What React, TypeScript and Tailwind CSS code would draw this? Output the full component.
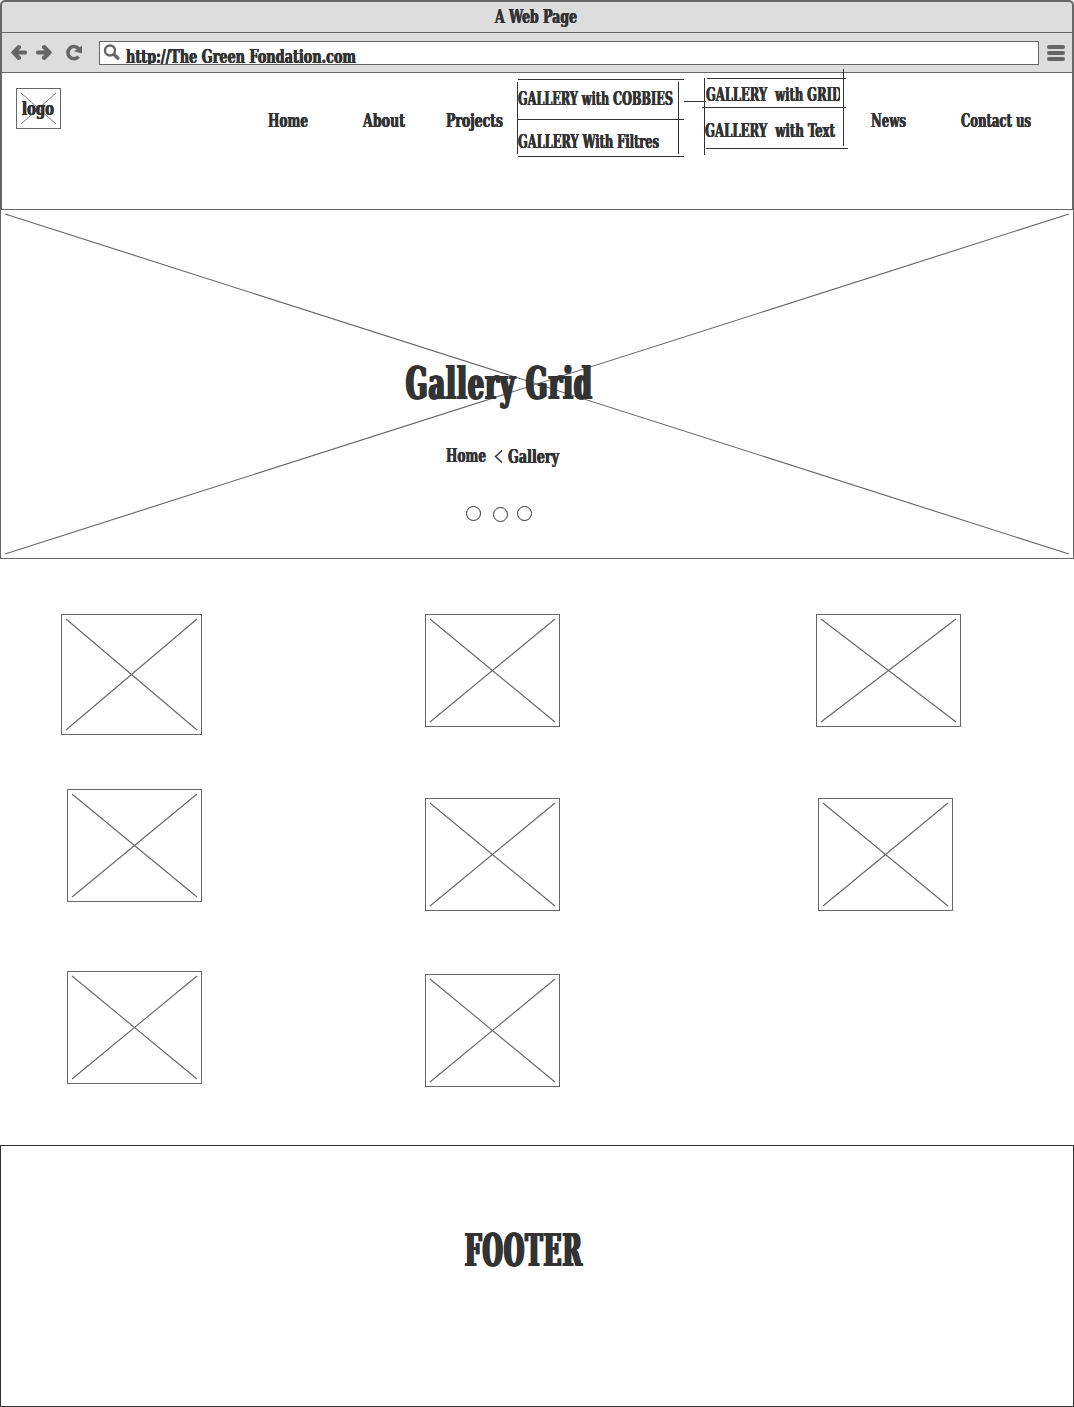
import { useLayoutEffect, useRef } from "react";

type TextProps = { text: string; width: number; className?: string };

/** Text squeezed horizontally to an exact width. */
function Squeezed({ text, width, className = "" }: TextProps) {
  const ref = useRef<HTMLSpanElement>(null);
  useLayoutEffect(() => {
    const el = ref.current;
    if (!el) return;
    el.style.transform = "none";
    const natural = el.getBoundingClientRect().width;
    el.style.transform = `scaleX(${width / natural})`;
  }, [text, width]);
  return (
    <span ref={ref} className={`inline-block origin-left whitespace-pre ${className}`}>
      {text}
    </span>
  );
}

function Label({ text, width, className = "" }: TextProps) {
  return (
    <span className={`block shrink-0 h-6 text-[19px] leading-6 ${className}`} style={{ width }}>
      <Squeezed text={text} width={width} className="[text-shadow:0.5px_0_0_#333333,-0.5px_0_0_#333333]" />
    </span>
  );
}

function Heading({ text, width, className = "" }: TextProps) {
  return (
    <h1 className={`h-12 text-[44px] leading-[48px] ${className}`} style={{ width }}>
      <Squeezed text={text} width={width} className="tracking-[0.05em] [text-shadow:1px_0_0_#333333,2px_0_0_#333333,-1px_0_0_#333333,-2px_0_0_#333333]" />
    </h1>
  );
}

/** Diagonals of a picture placeholder. */
function Cross({ w, h, inset = 4.5, stroke = 1.1 }: { w: number; h: number; inset?: number; stroke?: number }) {
  return (
    <svg className="block" width={w} height={h} fill="none" stroke="#666666" strokeWidth={stroke}>
      <path d={`M${inset} ${inset}L${w - inset} ${h - inset}M${w - inset} ${inset}L${inset} ${h - inset}`} />
    </svg>
  );
}

function Picture({ w, h, className = "" }: { w: number; h: number; className?: string }) {
  return (
    <div className={`w-fit h-fit border border-[#666666] ${className}`}>
      <Cross w={w - 2} h={h - 2} inset={4} />
    </div>
  );
}

function Rule({ className }: { className: string }) {
  return <span className={`absolute bg-[#333333] ${className}`} />;
}

function TitleBar() {
  return (
    <div className="h-[31px] border-b border-[#666666] flex pl-[493px] pt-0.5">
      <Label text="A Web Page" width={82} />
    </div>
  );
}

function Toolbar() {
  return (
    <div className="h-10 border-b border-[#666666] flex items-start">
      <svg className="shrink-0" width="97" height="39" viewBox="2 33 97 39" fill="none" stroke="#666666">
        <path
          d="M11.2 52L17.4 45.4Q18.4 44.6 19.6 45.2L21 46V48L18.6 50.4H25.6Q27 50.6 27 52.4Q27 54.2 25.6 54.4H18.6L21 57V59L19.6 59.8Q18.4 60.2 17.4 59.4L11.2 53Z"
          fill="#666666"
          stroke="none"
        />
        <path
          d="M51.8 52L45.6 45.4Q44.6 44.6 43.4 45.2L42 46V48L44.4 50.4H37.4Q36 50.6 36 52.4Q36 54.2 37.4 54.4H44.4L42 57V59L43.4 59.8Q44.6 60.2 45.6 59.4L51.8 53Z"
          fill="#666666"
          stroke="none"
        />
        <path d="M78.6 48.6A6.1 6.1 0 1 0 78.6 56.6" strokeWidth="3.6" />
        <path d="M82 45.6V53.2H81L74 51.2Z" fill="#666666" stroke="none" />
      </svg>
      <div className="mt-2 w-[940px] h-6 border border-[#666666] bg-white flex overflow-hidden">
        <svg className="shrink-0" width="26" height="22" viewBox="100 42 26 22" fill="none" stroke="#666666">
          <circle cx="110" cy="50.5" r="5" strokeWidth="2.4" />
          <path d="M114 54.6L118 58.2" strokeWidth="3.4" strokeLinecap="round" />
        </svg>
        <Label text="http://The Green Fondation.com" width={230} className="mt-0.5" />
      </div>
      <div className="ml-2 mt-3 flex flex-col gap-0.5">
        <span className="w-[18px] h-1 rounded-full bg-[#666666]" />
        <span className="w-[18px] h-1 rounded-full bg-[#666666]" />
        <span className="w-[18px] h-1 rounded-full bg-[#666666]" />
      </div>
    </div>
  );
}

function Logo() {
  return (
    <div className="relative ml-[14px] mt-[15px] w-[45px] h-[41px] border border-[#666666]">
      <Cross w={43} h={39} inset={4} stroke={0.9} />
      <Label text="logo" width={32} className="absolute left-[5px] top-[7px]" />
    </div>
  );
}

function ProjectsMenu() {
  return (
    <div className="relative ml-[14px] mt-1.5 w-[167px] h-[78px] pl-px pt-[7px]">
      <Label text="GALLERY with COBBIES" width={155} />
      <Label text="GALLERY With Filtres" width={141} className="mt-[19px]" />
      <Rule className="left-px top-0 w-[166px] h-px" />
      <Rule className="left-px top-10 w-[166px] h-px" />
      <Rule className="left-px top-[77px] w-[166px] h-px" />
      <Rule className="left-0 top-[3px] w-px h-[72px]" />
      <Rule className="left-[161px] top-[3px] w-px h-[72px]" />
      <Rule className="left-[167px] top-[22px] w-[22px] h-px" />
    </div>
  );
}

function GalleryMenu() {
  return (
    <div className="relative ml-[18px] -mt-1 w-[146px] h-[86px] pl-[3px] pt-[13px]">
      <div className="ml-px w-[134px] overflow-hidden">
        <Label text="GALLERY  with GRID" width={136} />
      </div>
      <Label text="GALLERY  with Text" width={130} className="mt-3" />
      <Rule className="left-[5px] top-[9px] w-[139px] h-px" />
      <Rule className="left-0 top-[38px] w-[144px] h-px" />
      <Rule className="left-1 top-[79px] w-[142px] h-px" />
      <Rule className="left-[2px] top-[9px] w-px h-[77px]" />
      <Rule className="left-[141px] top-0 w-px h-[77px]" />
    </div>
  );
}

function Nav() {
  return (
    <nav className="h-[136px] bg-white flex items-start">
      <Logo />
      <Label text="Home" width={40} className="ml-[207px] mt-[35px]" />
      <Label text="About" width={42} className="ml-[55px] mt-[35px]" />
      <Label text="Projects" width={57} className="ml-[41px] mt-[35px]" />
      <ProjectsMenu />
      <GalleryMenu />
      <Label text="News" width={35} className="ml-[23px] mt-[35px]" />
      <Label text="Contact us" width={70} className="ml-[55px] mt-[35px]" />
    </nav>
  );
}

function Hero() {
  return (
    <section className="relative h-[350px] border border-[#666666]">
      <div className="absolute inset-0">
        <Cross w={1072} h={348} inset={4} />
      </div>
      <div className="relative">
        <Heading text="Gallery Grid" width={187} className="ml-[405px] pt-[150px] box-content" />
        <div className="mt-[35px] ml-[445px] flex items-start">
          <Label text="Home" width={40} />
          <svg className="ml-2 mt-[7px]" width="10" height="13" fill="none" stroke="#333333" strokeWidth="1.5">
            <path d="M8 0.5L1.5 6.5L8 12.5" />
          </svg>
          <Label text="Gallery" width={51} className="ml-1 mt-px" />
        </div>
        <div className="mt-[38px] ml-[465px] flex items-start">
          <span className="size-[15px] rounded-full border border-[#333333] bg-white" />
          <span className="ml-3 mt-px size-[15px] rounded-full border border-[#333333] bg-white" />
          <span className="ml-[9px] size-[15px] rounded-full border border-[#333333] bg-white" />
        </div>
      </div>
    </section>
  );
}

function Gallery() {
  return (
    <section className="h-[586px] pl-[61px] pt-[55px] grid grid-cols-[364px_391px_1fr] grid-rows-[175px_182px_1fr]">
      <Picture w={141} h={121} />
      <Picture w={135} h={113} />
      <Picture w={145} h={113} />
      <Picture w={135} h={113} className="ml-1.5" />
      <Picture w={135} h={113} className="mt-[9px]" />
      <Picture w={135} h={113} className="mt-[9px] ml-0.5" />
      <Picture w={135} h={113} className="ml-1.5" />
      <Picture w={135} h={113} className="mt-[3px]" />
    </section>
  );
}

export default function App() {
  return (
    <div className="w-[1074px] h-[1407px] bg-white text-[#333333] font-bold font-['DejaVu_Serif_Condensed','DejaVu_Serif',serif] [font-stretch:condensed] overflow-hidden">
      <header className="h-[209px] border-2 border-b-0 border-[#666666] rounded-t-[5px] bg-[#dddddd]">
        <TitleBar />
        <Toolbar />
        <Nav />
      </header>
      <Hero />
      <Gallery />
      <footer className="h-[262px] border border-[#333333] pl-[464px] pt-[81px]">
        <Heading text="FOOTER" width={118} />
      </footer>
    </div>
  );
}
